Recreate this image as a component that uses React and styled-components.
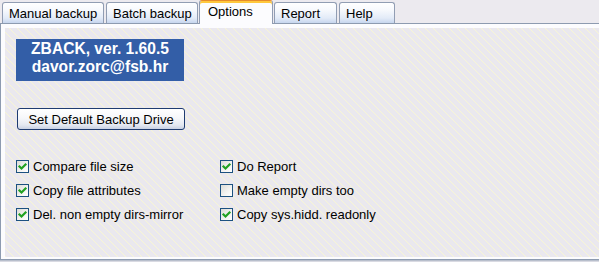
import React from "react";
import styled, { createGlobalStyle } from "styled-components";

const Global = createGlobalStyle`
  html, body { margin: 0; padding: 0; background: #ECEAEF; }
  body { font-family: "Liberation Sans", Arial, sans-serif; font-size: 13px; color: #000; }
  #root { width: 599px; height: 262px; overflow: hidden; }
`;

const Window = styled.div`
  width: 599px;
  height: 262px;
  display: flex;
  flex-direction: column;
  background: #ECEAEF;
`;

const TabBar = styled.div`
  height: 23px;
  display: flex;
  align-items: flex-end;
  gap: 2px;
  padding-left: 2px;
  position: relative;
  z-index: 2;
`;

const Tab = styled.div`
  box-sizing: border-box;
  width: ${(p) => (p.$active ? p.$w + 2 : p.$w)}px;
  height: ${(p) => (p.$active ? 24 : 21)}px;
  margin: ${(p) => (p.$active ? "0 -1px -1px -1px" : "0")};
  padding: ${(p) => (p.$active ? "0 0 3px 8px" : "1px 0 0 6px")};
  display: flex;
  align-items: center;
  white-space: nowrap;
  border: 1px solid #919DB3;
  border-bottom: none;
  border-radius: 3px 3px 0 0;
  background: ${(p) =>
    p.$active
      ? "#FCFCFE"
      : "linear-gradient(180deg, #FFFFFF 0%, #F7F9FD 35%, #E3EBF8 75%, #C7D6EE 100%)"};
  border-top-color: ${(p) => (p.$active ? "#E68B2C" : "#919DB3")};
  box-shadow: ${(p) => (p.$active ? "inset 0 2px 0 #FFC83C" : "none")};
  font-size: 13px;
  color: #000;
`;

const Pane = styled.div`
  box-sizing: border-box;
  height: 237px;
  border: 1px solid #8D9BB0;
  border-right: none;
  background: #FCFCFE;
  padding: 4px 0 2px 4px;
  display: flex;
  box-shadow: 0 1px 0 #B8BFCC, 0 2px 0 #D9DAE2;
`;

const Surface = styled.div`
  flex: 1;
  display: flex;
  flex-direction: column;
  align-items: flex-start;
  padding: 11px 0 0 11px;
  background-color: #EAE8EE;
  background-image: repeating-linear-gradient(
    45deg,
    #F8F6D4 0px,
    #F8F6D4 1.1px,
    #EAE8EE 1.1px,
    #EAE8EE 5.657px
  );
`;

const InfoBox = styled.div`
  box-sizing: border-box;
  width: 168px;
  height: 42px;
  padding-top: 1px;
  background: #335EA7;
  color: #FFFFFF;
  font-weight: bold;
  font-size: 15.6px;
  line-height: 18px;
  text-align: center;
`;

const PushButton = styled.button`
  box-sizing: border-box;
  margin: 27px 0 0 1px;
  width: 168px;
  height: 22px;
  padding: 0;
  border: 1px solid #1E3B70;
  border-radius: 3px;
  background: linear-gradient(180deg, #FFFFFF 0%, #F6F7FA 45%, #E4E8F1 80%, #C9D1E3 100%);
  font-family: "Liberation Sans", Arial, sans-serif;
  font-size: 13px;
  color: #000;
`;

const OptionGrid = styled.div`
  margin-top: 24px;
  display: grid;
  grid-template-columns: 204px auto;
  grid-template-rows: repeat(3, 24px);
  grid-auto-flow: column;
`;

const Option = styled.label`
  display: flex;
  align-items: center;
  gap: 4px;
  white-space: nowrap;
  font-size: 13px;
`;

const Box = styled.span`
  box-sizing: border-box;
  width: 13px;
  height: 13px;
  border: 1px solid #1C5180;
  background: linear-gradient(135deg, #DCDCD7 0%, #F4F4F2 60%, #FFFFFF 100%);
  display: flex;
  align-items: center;
  justify-content: center;
  flex: none;
`;

const Check = () => (
  <svg width="11" height="11" viewBox="0 0 11 11">
    <polyline
      points="2.5,5.5 4.5,7.5 8.5,3.5"
      fill="none"
      stroke="#21A121"
      strokeWidth="2.2"
      strokeLinecap="square"
    />
  </svg>
);

const CheckOption = ({ checked, children }) => (
  <Option>
    <Box>{checked && <Check />}</Box>
    {children}
  </Option>
);

const tabs = [
  { label: "Manual backup", w: 102 },
  { label: "Batch backup", w: 92 },
  { label: "Options", w: 72, active: true },
  { label: "Report", w: 63 },
  { label: "Help", w: 56 },
];

const options = [
  { label: "Compare file size", checked: true },
  { label: "Copy file attributes", checked: true },
  { label: "Del. non empty dirs-mirror", checked: true },
  { label: "Do Report", checked: true },
  { label: "Make empty dirs too", checked: false },
  { label: "Copy sys.hidd. readonly", checked: true },
];

export default function App() {
  return (
    <Window>
      <Global />
      <TabBar>
        {tabs.map((t) => (
          <Tab key={t.label} $w={t.w} $active={t.active}>
            {t.label}
          </Tab>
        ))}
      </TabBar>
      <Pane>
        <Surface>
          <InfoBox>
            ZBACK, ver. 1.60.5
            <br />
            davor.zorc@fsb.hr
          </InfoBox>
          <PushButton>Set Default Backup Drive</PushButton>
          <OptionGrid>
            {options.map((o) => (
              <CheckOption key={o.label} checked={o.checked}>
                {o.label}
              </CheckOption>
            ))}
          </OptionGrid>
        </Surface>
      </Pane>
    </Window>
  );
}
